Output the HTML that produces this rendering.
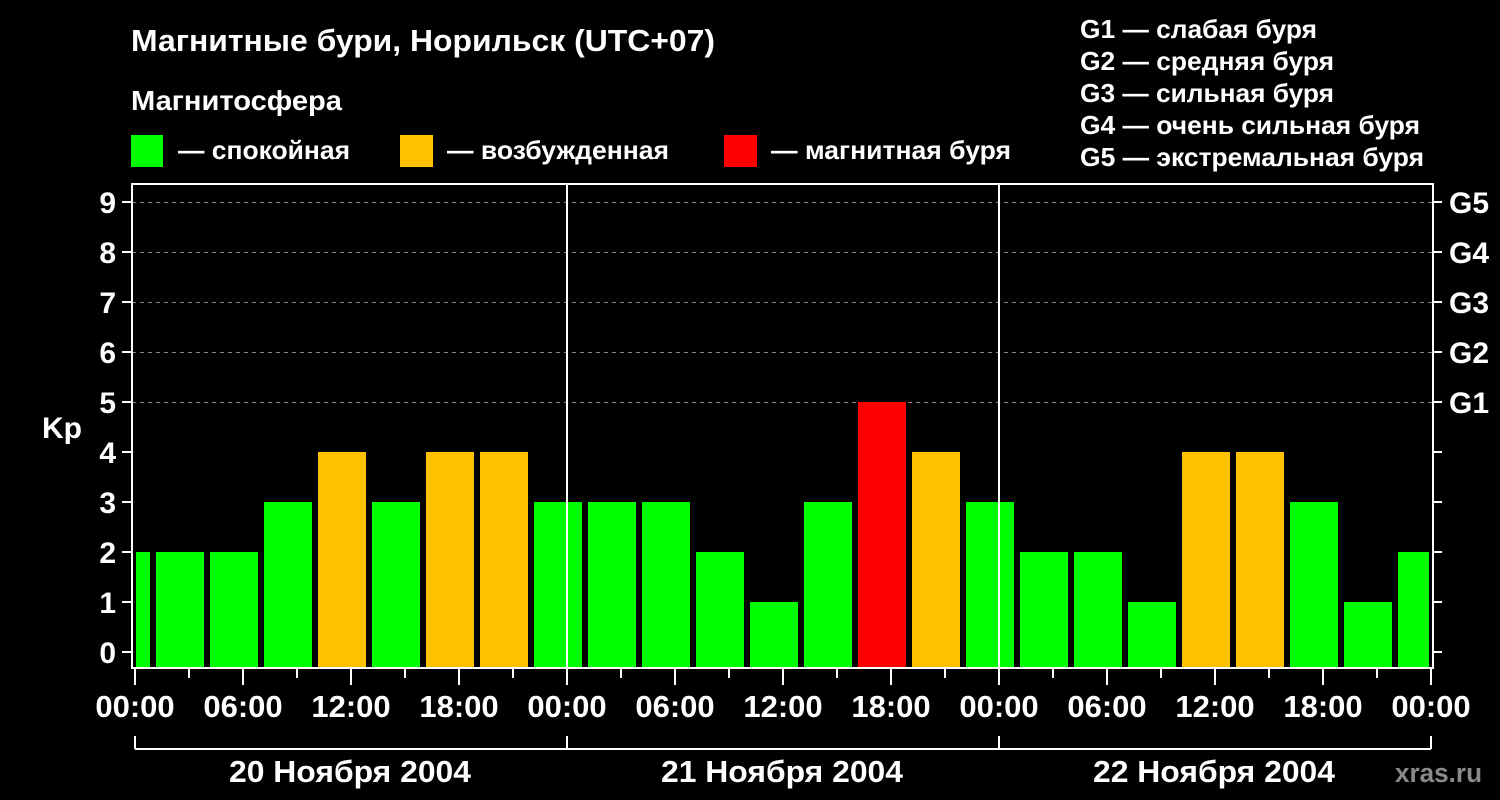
<!DOCTYPE html>
<html><head><meta charset="utf-8"><style>
html,body{margin:0;padding:0;background:#000;}
svg{display:block}
text{font-family:"Liberation Sans",sans-serif;font-weight:bold;fill:#fff}
</style></head><body>
<svg width="1500" height="800" viewBox="0 0 1500 800" xmlns="http://www.w3.org/2000/svg">
<rect width="1500" height="800" fill="#000"/>
<text x="131" y="51" font-size="31" textLength="584" lengthAdjust="spacingAndGlyphs">Магнитные бури, Норильск (UTC+07)</text>
<text x="131" y="110" font-size="28" textLength="211" lengthAdjust="spacingAndGlyphs">Магнитосфера</text>
<rect x="131" y="135" width="32" height="32" fill="#00ff00"/>
<text x="178" y="159" font-size="26" textLength="172" lengthAdjust="spacingAndGlyphs">— спокойная</text>
<rect x="400" y="135" width="33" height="32" fill="#ffc000"/>
<text x="447" y="159" font-size="26" textLength="222" lengthAdjust="spacingAndGlyphs">— возбужденная</text>
<rect x="724" y="135" width="33" height="32" fill="#ff0000"/>
<text x="771" y="159" font-size="26" textLength="240" lengthAdjust="spacingAndGlyphs">— магнитная буря</text>
<g font-size="26">
<text x="1080" y="38" textLength="237" lengthAdjust="spacingAndGlyphs">G1 — слабая буря</text>
<text x="1080" y="70" textLength="254" lengthAdjust="spacingAndGlyphs">G2 — средняя буря</text>
<text x="1080" y="102" textLength="254" lengthAdjust="spacingAndGlyphs">G3 — сильная буря</text>
<text x="1080" y="134" textLength="340" lengthAdjust="spacingAndGlyphs">G4 — очень сильная буря</text>
<text x="1080" y="166" textLength="344" lengthAdjust="spacingAndGlyphs">G5 — экстремальная буря</text>
</g>
<g stroke="#888" stroke-dasharray="4,4" stroke-width="1">
<line x1="132" y1="202.5" x2="1432" y2="202.5"/>
<line x1="132" y1="252.5" x2="1432" y2="252.5"/>
<line x1="132" y1="302.5" x2="1432" y2="302.5"/>
<line x1="132" y1="352.5" x2="1432" y2="352.5"/>
<line x1="132" y1="402.5" x2="1432" y2="402.5"/>
</g>
<g id="bars"></g>
<g stroke="#fff" stroke-width="2" fill="none">
<rect x="132" y="184" width="1301" height="484"/>
<line x1="567" y1="184" x2="567" y2="668"/>
<line x1="999" y1="184" x2="999" y2="668"/>
<line x1="135" y1="749" x2="1431" y2="749"/>
<line x1="135" y1="736" x2="135" y2="749"/>
<line x1="567" y1="736" x2="567" y2="749"/>
<line x1="999" y1="736" x2="999" y2="749"/>
<line x1="1431" y1="736" x2="1431" y2="749"/>
</g>
<g id="ticks" stroke="#fff" stroke-width="2"></g>
<g font-size="30" text-anchor="end" id="ylab"></g>
<g font-size="30" id="glab">
<text x="1449" y="213">G5</text><text x="1449" y="263">G4</text><text x="1449" y="313">G3</text><text x="1449" y="363">G2</text><text x="1449" y="413">G1</text>
</g>
<text x="42" y="438" font-size="30">Kp</text>
<g font-size="31" text-anchor="middle">
<text x="135" y="717">00:00</text><text x="243" y="717">06:00</text><text x="351" y="717">12:00</text><text x="459" y="717">18:00</text>
<text x="567" y="717">00:00</text><text x="675" y="717">06:00</text><text x="783" y="717">12:00</text><text x="891" y="717">18:00</text>
<text x="999" y="717">00:00</text><text x="1107" y="717">06:00</text><text x="1215" y="717">12:00</text><text x="1323" y="717">18:00</text>
<text x="1431" y="717">00:00</text>
<text x="350" y="782" textLength="242" lengthAdjust="spacingAndGlyphs">20 Ноября 2004</text>
<text x="782" y="782" textLength="242" lengthAdjust="spacingAndGlyphs">21 Ноября 2004</text>
<text x="1214" y="782" textLength="242" lengthAdjust="spacingAndGlyphs">22 Ноября 2004</text>
</g>
<text x="1395" y="782" font-size="27" style="fill:#8a8a8a" textLength="87" lengthAdjust="spacingAndGlyphs">xras.ru</text>
<script>
var v=[2,2,2,3,4,3,4,4,3,3,3,2,1,3,5,4,3,2,2,1,4,4,3,1,2];
var ns="http://www.w3.org/2000/svg",b=document.getElementById('bars');
v.forEach(function(k,i){var x1=102+54*i,x2=x1+48;x1=Math.max(x1,136);x2=Math.min(x2,1429);
var r=document.createElementNS(ns,'rect');r.setAttribute('x',x1);r.setAttribute('width',x2-x1);
var t=652-50*k;r.setAttribute('y',t);r.setAttribute('height',668-t);
r.setAttribute('fill',k>=5?'#ff0000':k==4?'#ffc000':'#00ff00');b.appendChild(r);});
var tk=document.getElementById('ticks'),yl=document.getElementById('ylab');
function L(a,b2,c,d){var l=document.createElementNS(ns,'line');l.setAttribute('x1',a);l.setAttribute('y1',b2);l.setAttribute('x2',c);l.setAttribute('y2',d);tk.appendChild(l);}
for(var k=0;k<=9;k++){var y=652-50*k;L(122,y,131,y);L(1433,y,1442,y);
var t=document.createElementNS(ns,'text');t.setAttribute('x',116);t.setAttribute('y',y+11);t.textContent=k;yl.appendChild(t);}
for(var i=0;i<=24;i++){var x=135+54*i;L(x,669,x,i%2==0?685:678);}
</script>
</svg>
</body></html>
